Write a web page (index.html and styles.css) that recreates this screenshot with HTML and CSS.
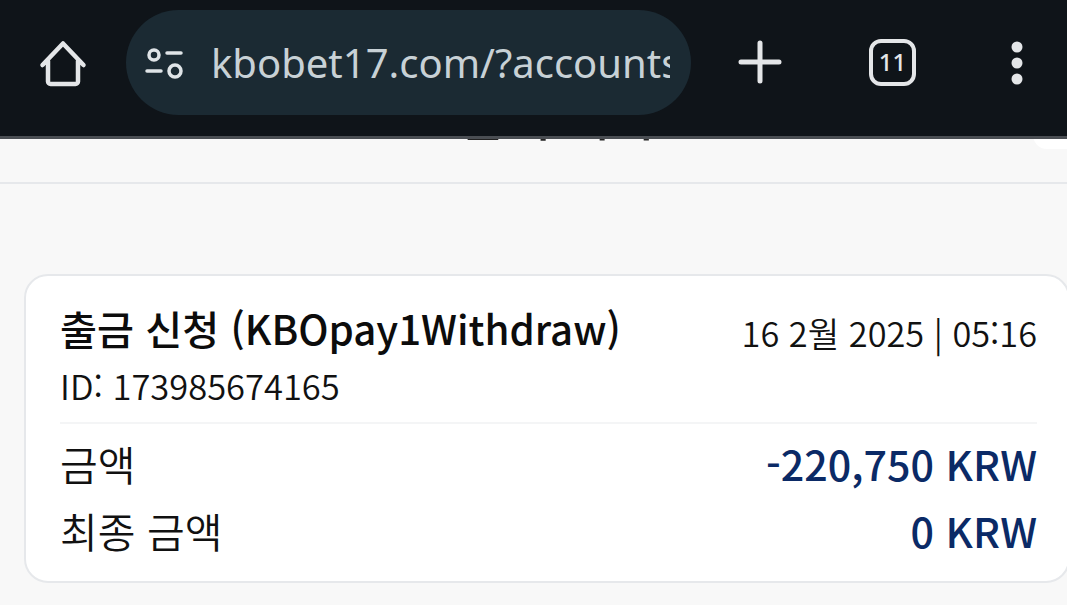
FILE: index.html
```html
<!DOCTYPE html>
<html lang="ko">
<head>
<meta charset="utf-8">
<title>금액 내역</title>
<link rel="stylesheet" href="styles.css">
</head>
<body>
<div class="screen">
  <header class="toolbar">
    <svg class="icon home" viewBox="0 0 48 48" width="48" height="48"><path d="M3.500 26 24 4.500 44.500 26M9 22v20.500a2.500 2.500 0 0 0 2.500 2.500h25a2.500 2.500 0 0 0 2.500-2.500V22" fill="none" stroke="#e4e6e8" stroke-width="4.500" stroke-linecap="round" stroke-linejoin="round"/></svg>
    <div class="urlbar">
      <svg class="tune" viewBox="0 0 40 34" width="40" height="34"><circle cx="9" cy="9" r="5" fill="none" stroke="#dfe4e7" stroke-width="3.500"/><path d="M22 7h14M2 25h14" stroke="#dfe4e7" stroke-width="3.500" stroke-linecap="round"/><circle cx="30" cy="25" r="6" fill="none" stroke="#dfe4e7" stroke-width="3.500"/></svg>
      <div class="url">kbobet17.com/?accounts</div>
    </div>
    <svg class="icon plus" viewBox="0 0 44 44" width="44" height="44"><path d="M22 3v38M3 22h38" stroke="#e4e6e8" stroke-width="5" stroke-linecap="round"/></svg>
    <div class="tabs">11</div>
    <svg class="icon more" viewBox="0 0 14 44" width="14" height="44"><circle cx="7" cy="6" r="5.500" fill="#e4e6e8"/><circle cx="7" cy="22" r="5.500" fill="#e4e6e8"/><circle cx="7" cy="38" r="5.500" fill="#e4e6e8"/></svg>
  </header>
  <div class="pagehead">
    <div class="pagetitle">금액 내역</div>
    <div class="cornerbtn"></div>
  </div>
  <main class="content">
    <section class="card">
      <div class="cardtop">
        <div class="ident">
          <h2 class="title">출금 신청 (KBOpay1Withdraw)</h2>
          <div class="txid">ID: 173985674165</div>
        </div>
        <div class="date">16 2월 2025 | 05:16</div>
      </div>
      <div class="row first"><span>금액</span><b class="amount">-220,750 KRW</b></div>
      <div class="row"><span>최종 금액</span><b class="amount">0 KRW</b></div>
    </section>
  </main>
</div>
</body>
</html>
```
FILE: styles.css
```css
* { box-sizing: border-box; margin: 0; padding: 0; }
html, body { height: 100%; overflow: hidden; }
body { background: #f8f8f8; font-family: "Noto Sans CJK KR", "Noto Sans", sans-serif; color: #111; }
.screen { width: 1067px; height: 605px; overflow: hidden; }
.toolbar {
  position: relative; z-index: 2;
  height: 139px; background: #0f1419; border-bottom: 3px solid #4a4e53;
  display: flex; align-items: flex-start; padding: 10px 0 0 39px;
}
.icon { flex: none; }
.home { margin-top: 29px; }
.urlbar {
  width: 565px; height: 105px; margin-left: 39px; border-radius: 53px;
  background: #1b2a33; display: flex; align-items: center; padding-left: 19px;
  flex: none;
}
.tune { flex: none; }
.url {
  width: 459px; margin-left: 26px; overflow: hidden; white-space: nowrap;
  font-family: "Noto Sans", sans-serif; font-size: 40px; line-height: 50px; color: #c8d1d6;
}
.plus { margin: 30px 0 0 47px; }
.tabs {
  flex: none; width: 47px; height: 47px; margin: 29px 0 0 87px;
  border: 4px solid #e4e6e8; border-radius: 12px; color: #e4e6e8;
  font-family: "Noto Sans", sans-serif; font-size: 24px; font-weight: 500; line-height: 38px; text-align: center;
}
.more { margin: 31px 0 0 94px; }
.pagehead {
  height: 45px; border-bottom: 2px solid #e6e8eb; position: relative;
  display: flex; justify-content: center; overflow: hidden; padding-left: 48px;
}
.pagetitle { font-size: 49px; line-height: 60px; margin-top: -54px; font-weight: 500; color: #222; }
.cornerbtn { position: absolute; right: -20px; top: -40px; width: 54px; height: 50px; border-radius: 14px; background: #fff; }
.content { padding: 90px 0 0 24px; }
.card {
  width: 1046px; height: 309px; background: #fff; border: 2px solid #e6e8eb; border-radius: 24px;
  padding: 27px 31px 0 34px;
}
.cardtop { display: flex; justify-content: space-between; align-items: flex-start; height: 121px; border-bottom: 2px solid #f4f5f6; }
.title { font-size: 40.200px; line-height: 50px; font-weight: 500; color: #0c0c0c; white-space: nowrap; }
.txid { font-size: 34.500px; line-height: 40px; margin-top: 12px; font-weight: 350; color: #111; }
.date { font-size: 34.300px; line-height: 44px; margin-top: 7px; font-weight: 350; color: #111; }
.row { display: flex; justify-content: space-between; align-items: center; height: 67px; font-size: 41px; font-weight: 350; color: #111; }
.row.first { margin-top: 5px; }
.amount { font-size: 41.200px; font-weight: 500; color: #0b2a66; }
```
